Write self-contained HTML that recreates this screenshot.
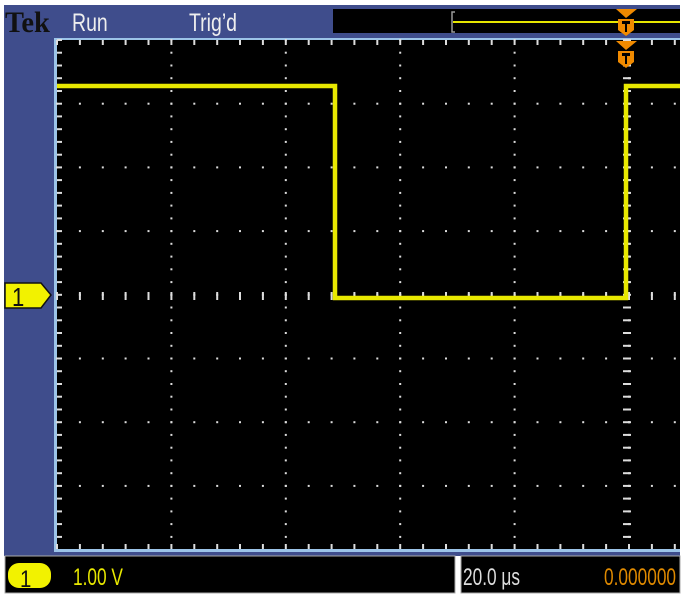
<!DOCTYPE html><html><head><style>
body{margin:0;background:#fff;width:686px;height:595px;overflow:hidden}
svg{display:block}
text{font-family:"Liberation Sans",sans-serif}
</style></head><body>
<svg id="s" width="686" height="595" xmlns="http://www.w3.org/2000/svg">
<rect x="0" y="0" width="686" height="595" fill="#fff"/>
<rect x="4" y="5" width="676" height="551" fill="#3f4d8c"/>
<text x="5" y="32" font-weight="bold" font-size="30" fill="#111" style="font-family:'Liberation Serif',serif" transform="scale(0.95,1)" transform-origin="5 32">Tek</text>
<text x="72" y="31" font-size="25" fill="#eee" transform="scale(0.78,1)" transform-origin="72 31">Run</text>
<text x="189" y="31" font-size="25" fill="#eee" transform="scale(0.78,1)" transform-origin="189 31">Trig’d</text>
<rect x="333" y="9" width="347" height="24" fill="#000"/>
<path d="M455 12 H452 V32 H455" stroke="#999" stroke-width="1.5" fill="none"/>
<line x1="453" y1="22" x2="680" y2="22" stroke="#e6e600" stroke-width="2"/>
<g><path d="M616 9 H637 L626 18 Z" fill="#f08a00"/><path d="M618 19 H634 V30 L626 36 L618 30 Z" fill="#f08a00"/><path d="M622 21 H630 V24 H627 V32 H625 V24 H622 Z" fill="#000"/></g>
<rect x="54" y="38" width="626" height="514" fill="#9cc4e8"/>
<rect x="57" y="40" width="623" height="509" fill="#000"/>
<g id="grid"></g>
<path d="M57 86 H335 V298 H626 V86 H680" stroke="#e8e800" stroke-width="4.5" fill="none"/>
<g transform="translate(0,32)"><path d="M616 9 H637 L626 18 Z" fill="#f08a00"/><path d="M618 19 H634 V30 L626 36 L618 30 Z" fill="#f08a00"/><path d="M622 21 H630 V24 H627 V32 H625 V24 H622 Z" fill="#000"/></g>
<path d="M5 283 H41 L51 295 L41 308 H5 Z" fill="#f2f200" stroke="#111" stroke-width="1.5"/>
<text x="12" y="306" font-size="26" fill="#111" transform="scale(0.85,1)" transform-origin="12 306">1</text>
<rect x="5" y="556" width="450" height="37" fill="#000" stroke="#aaa" stroke-width="1"/>
<rect x="461" y="556" width="219" height="37" fill="#000" stroke="#aaa" stroke-width="1"/>
<rect x="8" y="563" width="43" height="25" rx="11" fill="#f2f200"/>
<text x="20" y="587" font-size="24" fill="#111" transform="scale(0.85,1)" transform-origin="20 587">1</text>
<text x="73" y="585" font-size="24" fill="#e8e800" transform="scale(0.72,1)" transform-origin="73 585">1.00 V</text>
<text x="463" y="585" font-size="24" fill="#ddd" transform="scale(0.72,1)" transform-origin="463 585">20.0 μs</text>
<text x="604" y="585" font-size="24" fill="#e08a00" transform="scale(0.72,1)" transform-origin="604 585">0.000000</text>
</svg>
<script>
var g=document.getElementById('grid'),h='';
var X0=57,dx=114.4,Y0=40,dy=63.7,c='#ddd';
function r(x,y,w,hh){h+='<rect x="'+x.toFixed(1)+'" y="'+y.toFixed(1)+'" width="'+w+'" height="'+hh+'" fill="'+c+'"/>';}
for(var i=1;i<=5;i++){var x=X0+dx*i;for(var j=0;j<40;j++){r(x-1,Y0+j*dy/5-1,2,2);}}
for(var j=1;j<=7;j++){var y=Y0+dy*j;for(var i=0;i<30;i++){r(X0+i*dx/5-1,y-1,2,2);}}
for(var i=0;i<30;i++){var x=X0+i*dx/5;r(x-1,Y0,2,5);r(x-1,549-5,2,5);r(x-1,292,2,8);}
for(var j=0;j<40;j++){var y=Y0+j*dy/5;r(X0,y-1,5,2);r(623,y-1,8,2);}
g.innerHTML=h;
</script>
</body></html>
